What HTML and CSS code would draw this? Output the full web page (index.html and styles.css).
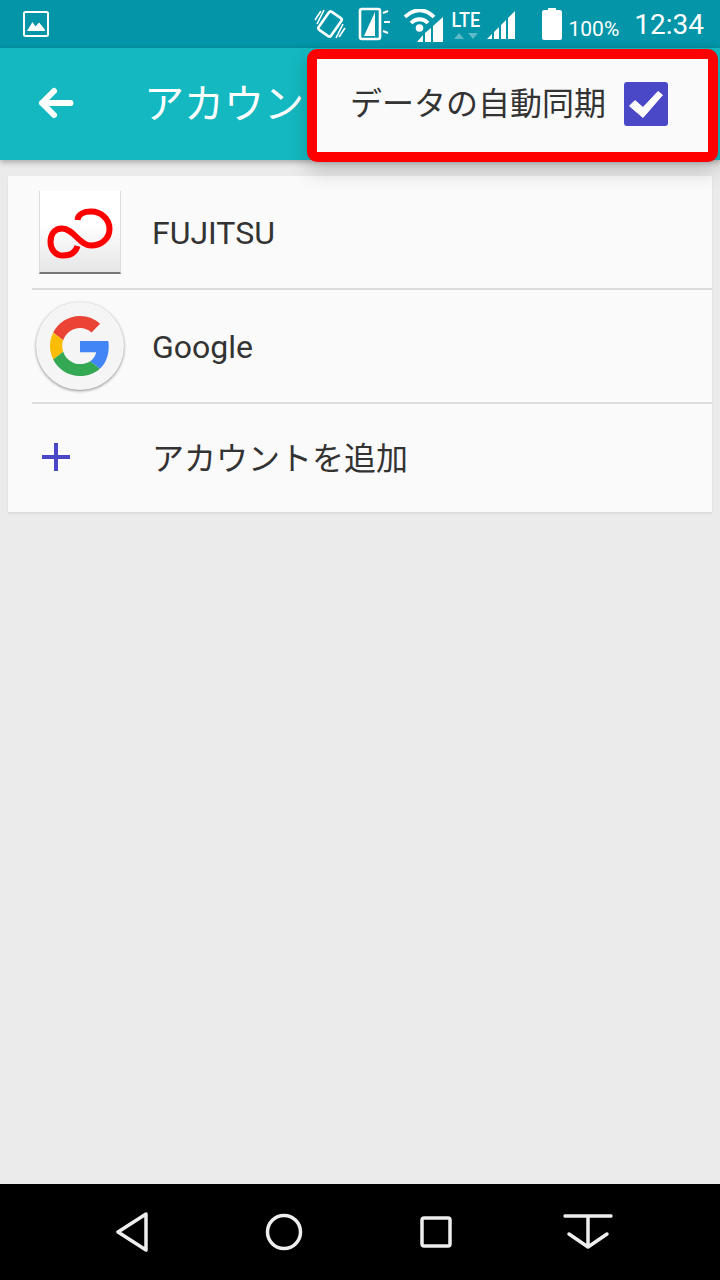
FILE: index.html
```html
<!DOCTYPE html>
<html lang="ja">
  <head>
    <meta charset="UTF-8" />
    <title>アカウント</title>
    <link rel="stylesheet" href="styles.css">
  </head>
  <body>
    <div class="status-bar">
      <svg class="st-picture" width="28" height="28" viewBox="0 0 28 28">
        <rect x="2" y="2" width="24" height="24" rx="1.5" fill="none" stroke="#fff" stroke-width="2"/>
        <path d="M5 21 L10.500 12 L13.500 16.500 L17 12.500 L22.500 19 L23 21 Z" fill="#fff"/>
      </svg>
      <div class="status-right">
        <svg class="st-vibrate" width="34" height="34" viewBox="0 0 34 34" fill="none" stroke="#fff">
          <rect x="9.500" y="6" width="15" height="22" rx="2" transform="rotate(35 17 17)" stroke-width="2.600"/>
          <path d="M8 4 L2 13 M11 3 L4 17 M26 30 L32 21 M23 31 L30 17" stroke-width="1.600"/>
        </svg>
        <svg class="st-bright" width="34" height="34" viewBox="0 0 34 34">
          <rect x="2" y="2" width="20" height="30" rx="2" fill="none" stroke="#fff" stroke-width="2.600"/>
          <path d="M17 5 V29 H6 Z" fill="#fff"/>
          <path d="M25 6 L30 4 M26 15 L32 15 M25 24 L30 26" stroke="#fff" stroke-width="2" fill="none"/>
        </svg>
        <svg class="st-wifi" width="40" height="36" viewBox="0 0 40 36">
          <path d="M1 8 C10 -1 21 -1 30 8 M7 14 C12 9 19 9 24 14" fill="none" stroke="#fff" stroke-width="3.800"/>
          <circle cx="15.500" cy="19" r="3.800" fill="#fff"/>
          <path d="M13 33 L19 33 L19 26 Z M21 33 L27 33 L27 19 L21 24 Z M29 33 L39 33 L39 8 L29 17 Z" fill="#fff"/>
        </svg>
        <div class="st-lte">
          <span class="lte-text">LTE</span>
          <svg width="28" height="8" viewBox="0 0 28 8"><path d="M2 7 L7 1 L12 7 Z M16 1 L26 1 L21 7 Z" fill="#fff" opacity="0.35"/></svg>
        </div>
        <svg class="st-signal" width="30" height="30" viewBox="0 0 30 30">
          <path d="M1 29 L6 29 L6 24 Z M8 29 L13 29 L13 17 L8 22 Z M15 29 L20 29 L20 10 L15 15 Z M22 29 L29 29 L29 1 L22 8 Z" fill="#fff"/>
        </svg>
        <svg class="st-battery" width="20" height="32" viewBox="0 0 20 32">
          <path d="M6 0 H14 V2 H18 Q20 2 20 4 V30 Q20 32 18 32 H2 Q0 32 0 30 V4 Q0 2 2 2 H6 Z" fill="#fff"/>
        </svg>
        <span class="st-percent">100%</span>
        <span class="st-clock">12:34</span>
      </div>
    </div>

    <div class="app-bar">
      <svg class="back-icon" width="36" height="32" viewBox="0 0 36 32">
        <path d="M32.500 16 H4 M16 4 L4 16 L16 28" fill="none" stroke="#fff" stroke-width="6" stroke-linecap="round" stroke-linejoin="round"/>
      </svg>
      <h1 class="app-title">アカウント</h1>
    </div>

    <!-- メニュー(赤枠つき) -->
    <div class="sync-menu">
      <span class="sync-label">データの自動同期</span>
      <svg class="sync-check" width="44" height="44" viewBox="0 0 44 44">
        <rect width="44" height="44" rx="3" fill="#4b48c8"/>
        <path d="M5.500 24 L11 18.500 L19 25.500 L34 9.500 L38.500 13 L19 35.500 Z" fill="#fff" stroke="#fff" stroke-width="1" stroke-linejoin="round"/>
      </svg>
    </div>

    <div class="content">
      <div class="account-list">
        <div class="account-row">
          <div class="row-icon">
            <div class="fujitsu-tile">
              <svg width="80" height="81" viewBox="1 0 80 81">
                <path d="M38.500 29 C39 23 45 20.500 52 20.500 C62 20.500 70.500 28 70.500 38 C70.500 48 62 54.500 52 54.500 C40 54.500 35 37.500 23 37.500 C15 37.500 11.500 44 11.500 51 C11.500 58 16 64.500 24 64.500 C31 64.500 36.500 62 38.500 55" fill="none" stroke="#f00" stroke-width="6"/>
              </svg>
            </div>
          </div>
          <span class="row-label">FUJITSU</span>
        </div>
        <div class="account-row">
          <div class="row-icon">
            <div class="google-disc">
              <svg width="60" height="60" viewBox="0 0 48 48">
                <path fill="#ea4335" d="M24 9.500c3.540 0 6.710 1.220 9.210 3.600l6.850-6.850C35.900 2.380 30.470 0 24 0 14.620 0 6.510 5.380 2.560 13.220l7.980 6.190C12.430 13.720 17.740 9.500 24 9.500z"/>
                <path fill="#4285f4" d="M46.980 24.550c0-1.570-.15-3.090-.38-4.550H24v9.020h12.940c-.58 2.960-2.260 5.480-4.780 7.180l7.730 6c4.510-4.180 7.090-10.360 7.090-17.650z"/>
                <path fill="#fbbc05" d="M10.530 28.590c-.48-1.450-.76-2.990-.76-4.590s.27-3.140.76-4.590l-7.980-6.190C.92 16.460 0 20.120 0 24c0 3.880.92 7.540 2.560 10.780l7.970-6.190z"/>
                <path fill="#34a853" d="M24 48c6.480 0 11.930-2.130 15.890-5.810l-7.730-6c-2.150 1.450-4.920 2.300-8.160 2.300-6.260 0-11.570-4.220-13.470-9.910l-7.980 6.190C6.510 42.620 14.620 48 24 48z"/>
              </svg>
            </div>
          </div>
          <span class="row-label">Google</span>
        </div>
        <div class="account-row add-row">
          <div class="row-icon">
            <svg class="add-icon" width="28" height="28" viewBox="0 0 28 28"><path d="M14 0 V28 M0 14 H28" stroke="#4b48c8" stroke-width="4"/></svg>
          </div>
          <span class="row-label">アカウントを追加</span>
        </div>
      </div>
    </div>

    <div class="nav-bar">
      <div class="nav-item"><svg width="34" height="40" viewBox="0 0 34 40"><path d="M31 2 L3 20 L31 38 Z" fill="none" stroke="#eee" stroke-width="3.500" stroke-linejoin="round"/></svg></div>
      <div class="nav-item"><svg width="38" height="38" viewBox="0 0 38 38"><circle cx="19" cy="19" r="16.500" fill="none" stroke="#eee" stroke-width="3.500"/></svg></div>
      <div class="nav-item"><svg width="32" height="32" viewBox="0 0 32 32"><rect x="2" y="2" width="28" height="28" rx="2" fill="none" stroke="#eee" stroke-width="3.500"/></svg></div>
      <div class="nav-item"><svg width="50" height="36" viewBox="0 0 50 36"><path d="M2 2 H48 M25 2 V33 M6 20 L25 33 L44 20" fill="none" stroke="#eee" stroke-width="3.500" stroke-linecap="round" stroke-linejoin="round"/></svg></div>
    </div>
  </body>
</html>
```

FILE: styles.css
```css
* {
  margin: 0;
  padding: 0;
  box-sizing: border-box;
}
html, body {
  height: 100%;
}
body {
  font-family: Roboto, "Noto Sans CJK JP", sans-serif;
  background: #ebebeb;
  color: #333;
  display: flex;
  flex-direction: column;
  width: 720px;
  height: 1280px;
  overflow: hidden;
  position: relative;
}

.status-bar {
  height: 48px;
  background: #0495a8;
  display: flex;
  align-items: center;
  justify-content: space-between;
  padding: 0 16px 0 22px;
  flex-shrink: 0;
}
.status-right {
  display: flex;
  align-items: center;
  color: #fff;
}
.st-vibrate { margin-right: 11px; }
.st-bright { margin-right: 12px; }
.st-wifi { margin-top: 6px; margin-right: 6px; }
.st-lte {
  display: flex;
  flex-direction: column;
  align-items: center;
  margin-right: 5px;
}
.lte-text {
  font-size: 20px;
  line-height: 23px;
  font-weight: 500;
  transform: scaleX(0.9);
}
.st-signal { margin-right: 26px; margin-top: 2px; }
.st-battery { margin-right: 6px; }
.st-percent {
  font-size: 21px;
  margin-top: 10px;
  margin-right: 15px;
}
.st-clock {
  font-size: 28px;
}

.app-bar {
  height: 112px;
  background: #14b8c0;
  display: flex;
  align-items: center;
  box-shadow: 0 2px 6px rgba(0, 0, 0, 0.3);
  flex-shrink: 0;
  position: relative;
  padding-bottom: 2px;
}
.back-icon { margin-left: 38px; }
.app-title {
  font-size: 40px;
  font-weight: 400;
  color: #fff;
  margin-left: 70px;
  padding-bottom: 4px;
}

.sync-menu {
  position: absolute;
  top: 49px;
  left: 307px;
  width: 411px;
  height: 113px;
  background: #fafafa;
  border: 10px solid #f00;
  border-radius: 10px;
  display: flex;
  align-items: center;
  justify-content: space-between;
  padding: 0 40px 4px 33px;
  box-shadow: 0 10px 20px rgba(0, 0, 0, 0.18);
}
.sync-label {
  font-size: 32px;
  color: #333;
  padding-bottom: 5px;
}

.content {
  flex-grow: 1;
  padding: 16px 8px 0;
}
.account-list {
  background: #fafafa;
  box-shadow: 0 2px 2px rgba(0, 0, 0, 0.08);
}
.account-row {
  height: 114px;
  display: flex;
  align-items: center;
  margin-left: 24px;
  border-bottom: 2px solid #dcdcdc;
}
.add-row {
  height: 108px;
  border-bottom: none;
  padding-bottom: 4px;
}
.row-icon {
  width: 120px;
  display: flex;
  flex-shrink: 0;
}
.row-label {
  font-size: 32px;
  color: #333;
  padding-top: 2px;
}
.add-row .row-label {
  padding-top: 0;
}
.add-icon {
  margin-left: 10px;
  margin-top: 2px;
}
.fujitsu-tile {
  width: 82px;
  height: 83px;
  margin-left: 7px;
  background: linear-gradient(to bottom, #fff 40%, #e6e6e6);
  border-left: 1px solid #ddd;
  border-right: 1px solid #ddd;
  border-bottom: 2px solid #777;
  display: flex;
  align-items: center;
  justify-content: center;
}
.google-disc {
  width: 88px;
  height: 88px;
  margin-left: 4px;
  border-radius: 50%;
  background: #f5f5f5;
  box-shadow: 0 1px 3px rgba(0, 0, 0, 0.45);
  display: flex;
  align-items: center;
  justify-content: center;
}

.nav-bar {
  height: 96px;
  background: #000;
  display: grid;
  grid-template-columns: repeat(4, 152px);
  align-items: center;
  flex-shrink: 0;
  padding-left: 56px;
}
.nav-item {
  display: flex;
  justify-content: center;
}
```
